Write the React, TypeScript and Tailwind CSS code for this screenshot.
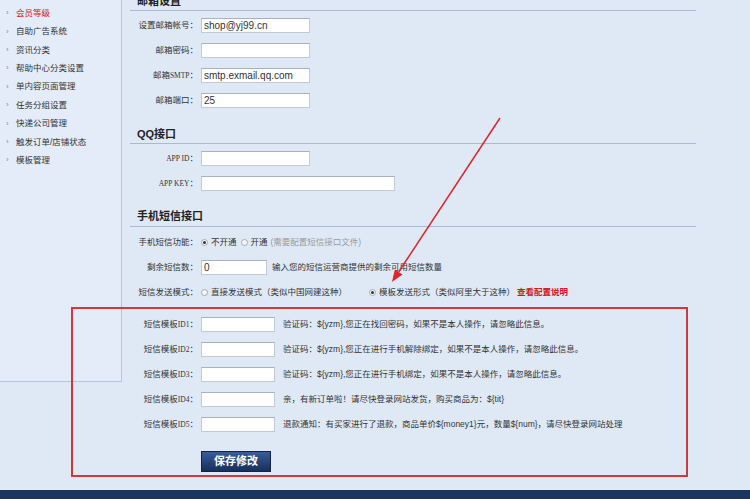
import React from "react";

const sideItems = [
  "会员等级",
  "自助广告系统",
  "资讯分类",
  "帮助中心分类设置",
  "单内容页面管理",
  "任务分组设置",
  "快递公司管理",
  "触发订单/店铺状态",
  "模板管理",
];

function Radio({ checked }: { checked?: boolean }) {
  return (
    <span className="inline-flex h-[7px] w-[7px] shrink-0 items-center justify-center rounded-full border border-[#a3abb5] bg-[#f6f7f9]">
      {checked ? <span className="h-[3px] w-[3px] rounded-full bg-[#333]" /> : null}
    </span>
  );
}

function Header({ children, pt, pb }: { children: React.ReactNode; pt: string; pb: string }) {
  return (
    <div className={`${pt} ${pb} border-b border-[#a8b9d0] pl-[7px] text-[11px] font-bold leading-[12px] text-[#222]`}>
      {children}
    </div>
  );
}

function LabelText({ text }: { text: string }) {
  const parts = text.split(/([A-Za-z0-9 ]+)/).filter((p) => p.length > 0);
  return (
    <>
      {parts.map((p, i) =>
        /^[A-Za-z0-9 ]+$/.test(p) ? (
          <span key={i} className="font-['Liberation_Serif',serif] text-[7.5px] whitespace-pre">
            {p}
          </span>
        ) : (
          <span key={i}>{p}</span>
        )
      )}
    </>
  );
}

function Row({ label, children }: { label: string; children: React.ReactNode }) {
  return (
    <div className="flex h-[25px] items-center">
      <div className="w-[68px] shrink-0 text-right text-[8.5px] text-[#333]">
        <LabelText text={label} />
      </div>
      <div className="ml-[3px] flex items-center">{children}</div>
    </div>
  );
}

function Input({ w, value }: { w: string; value?: string }) {
  return (
    <div
      className={`${w} flex h-[15px] items-center border border-[#c2cad4] border-t-[#a9b2bd] bg-white pl-[2px] text-[10px] leading-none text-[#333]`}
    >
      {value}
    </div>
  );
}

const templates = [
  "验证码：${yzm},您正在找回密码，如果不是本人操作，请忽略此信息。",
  "验证码：${yzm},您正在进行手机解除绑定，如果不是本人操作，请忽略此信息。",
  "验证码：${yzm},您正在进行手机绑定，如果不是本人操作，请忽略此信息。",
  "亲，有新订单啦！请尽快登录网站发货，购买商品为：${tit}",
  "退款通知：有买家进行了退款，商品单价${money1}元，数量${num}，请尽快登录网站处理",
];

export default function App() {
  return (
    <div className="relative h-[499px] w-[750px] overflow-hidden bg-[#dfe9f6] font-['Liberation_Sans','Noto_Sans_CJK_SC',sans-serif]">
      <div className="flex h-[490px]">
        <aside className="h-[382px] w-[122px] shrink-0 border-b border-r border-[#b5c5da] bg-[#e3ecf8] pt-[4px]">
          {sideItems.map((t, i) => (
            <div key={t} className="flex h-[18.4px] items-center text-[8.5px]">
              <span className="w-[16px] pl-[6px] text-[8px] text-[#888]">›</span>
              <span className={i === 0 ? "text-[#d4161c]" : "text-[#333]"}>{t}</span>
            </div>
          ))}
        </aside>
        <main className="-mt-[20px] ml-[8px] w-[566px]">
          <Header pt="pt-[15px]" pb="pb-[3px]">邮箱设置</Header>
          <div className="mt-[2px]">
            <Row label="设置邮箱帐号：">
              <Input w="w-[109px]" value="shop@yj99.cn" />
            </Row>
            <Row label="邮箱密码：">
              <Input w="w-[109px]" />
            </Row>
            <Row label="邮箱SMTP：">
              <Input w="w-[109px]" value="smtp.exmail.qq.com" />
            </Row>
            <Row label="邮箱端口：">
              <Input w="w-[109px]" value="25" />
            </Row>
          </div>
          <Header pt="pt-[15px]" pb="pb-[3px]">QQ接口</Header>
          <div className="mt-[2px]">
            <Row label="APP ID：">
              <Input w="w-[109px]" />
            </Row>
            <Row label="APP KEY：">
              <Input w="w-[194px]" />
            </Row>
          </div>
          <Header pt="pt-[14px]" pb="pb-[4px]">手机短信接口</Header>
          <div className="mt-[3px] text-[8.5px] text-[#333]">
            <Row label="手机短信功能：">
              <div className="flex items-center text-[8.5px] text-[#333]">
                <Radio checked />
                <span className="ml-[3px]">不开通</span>
                <span className="ml-[4px]" />
                <Radio />
                <span className="ml-[3px]">开通</span>
                <span className="ml-[3px] text-[#9a9a9a]">(需要配置短信接口文件)</span>
              </div>
            </Row>
            <Row label="剩余短信数：">
              <Input w="w-[66px]" value="0" />
              <span className="ml-[5px] text-[8.5px] text-[#333]">输入您的短信运营商提供的剩余可用短信数量</span>
            </Row>
            <Row label="短信发送模式：">
              <div className="flex items-center text-[8.5px] text-[#333]">
                <Radio />
                <span className="ml-[3px] w-[158px]">直接发送模式（类似中国网建这种）</span>
                <Radio checked />
                <span className="ml-[3px]">模板发送形式（类似阿里大于这种）</span>
                <span className="ml-[2px] font-bold text-[#d0161c]">查看配置说明</span>
              </div>
            </Row>
          </div>
          <div className="mt-[7px]">
            {templates.map((t, i) => (
              <Row key={i} label={`短信模板ID${i + 1}：`}>
                <Input w="w-[74px]" />
                <span className="ml-[8px] text-[8.5px] text-[#333]">{t}</span>
              </Row>
            ))}
          </div>
          <div className="ml-[71px] mt-[14px] flex h-[21px] w-[70px] items-center justify-center border border-[#0f2446] bg-gradient-to-b from-[#3a5d9a] to-[#172f5c] text-[11px] font-bold text-white">
            保存修改
          </div>
        </main>
      </div>
      <div className="h-[9px] bg-[#1b365e]" />

      <div className="pointer-events-none absolute left-[71px] top-[307px] h-[170px] w-[617px] border-2 border-[#d5363b]" />
      <svg className="pointer-events-none absolute left-0 top-0" width="750" height="499" viewBox="0 0 750 499">
        <line x1="500" y1="118" x2="398.6" y2="272" stroke="#e0242a" strokeWidth="1.5" />
        <polygon points="392,282 402.5,274.6 394.8,269.4" fill="#e0242a" />
      </svg>
    </div>
  );
}
